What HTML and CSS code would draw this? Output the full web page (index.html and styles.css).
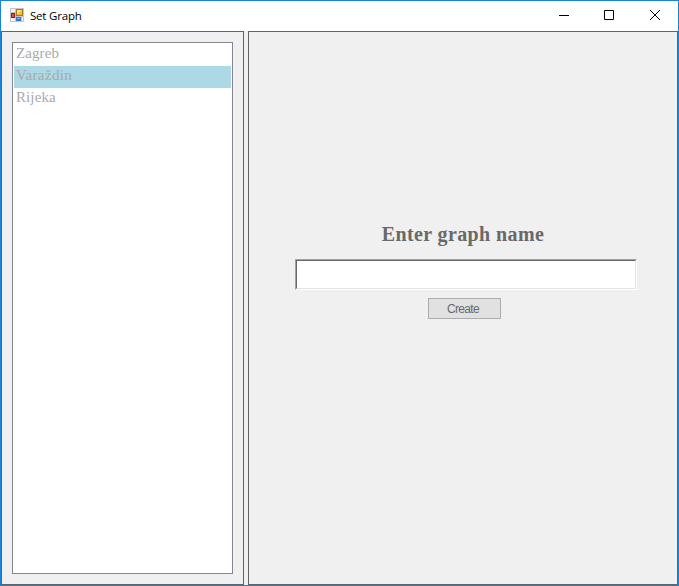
FILE: index.html
```html
<!DOCTYPE html>
<html lang="en">
<head>
<meta charset="utf-8">
<title>Set Graph</title>
<link rel="stylesheet" href="styles.css">
</head>
<body>
<div class="window">
  <header class="titlebar">
    <svg class="app-icon" width="14" height="14" viewBox="0 0 14 14" shape-rendering="crispEdges">
      <path fill="#c3c5c9" d="M0 0h14v14H0z"/>
      <path fill="#f4f5f7" d="M1 1h4v3H1zM1 10h4v3H1zM12 9h1v4h-1z"/>
      <path fill="#a87a20" d="M6 1h7v7H6z"/>
      <path fill="#f9bd2c" d="M7 2h5v5H7z"/>
      <path fill="#ffe07c" d="M7 2h4v2H9v2H7z"/>
      <path fill="#9c1c14" d="M1 5h4v5H1z"/>
      <path fill="#dc5140" d="M2 6h2v3H2z"/>
      <path fill="#3f73cf" d="M6 9h5v4H6z"/>
      <path fill="#80adf5" d="M7 10h3v1H7z"/>
    </svg>
    <span class="title">Set Graph</span>
    <div class="controls">
      <svg width="10" height="10" viewBox="0 0 10 10"><path d="M0 5.5h10"/></svg>
      <svg width="10" height="10" viewBox="0 0 10 10"><path d="M.5.5h9v9h-9z"/></svg>
      <svg width="10" height="10" viewBox="0 0 10 10"><path d="M0 0l10 10M10 0L0 10"/></svg>
    </div>
  </header>
  <main class="panes">
    <section class="pane">
      <ul class="list">
        <li class="zagreb">Zagreb</li>
        <li class="varazdin selected">Varaždin</li>
        <li class="rijeka">Rijeka</li>
      </ul>
    </section>
    <section class="pane form">
      <h1>Enter graph name</h1>
      <div class="field"><input type="text" aria-label="Graph name"></div>
      <button><span>Create</span></button>
    </section>
  </main>
</div>
</body>
</html>
```

FILE: styles.css
```css
* { box-sizing: border-box; }
body { margin: 0; }
.window {
  width: 679px;
  height: 586px;
  border: 1px solid #1883d7;
  background: #f0f0f0;
  display: flex;
  flex-direction: column;
}
.titlebar {
  height: 30px;
  flex: none;
  background: #fff;
  display: flex;
  align-items: center;
  padding: 0 18px 2px 9px;
}
.title {
  margin-left: 6px;
  font: 11.5px/16px "Open Sans", sans-serif;
  letter-spacing: -0.2px;
  color: #000;
  padding-top: 2px;
}
.controls { margin-left: auto; display: flex; gap: 35px; }
.controls svg { display: block; fill: none; stroke: #000; stroke-width: 1; }
.controls svg:last-child { margin-left: 1px; }
.panes {
  flex: 1;
  display: grid;
  grid-template-columns: 243px 430px;
  gap: 4px;
}
.pane { border: 1px solid #646464; padding: 10px; background: #f0f0f0; }
.list {
  list-style: none;
  margin: 0;
  padding: 1px;
  width: 221px;
  height: 532px;
  border: 1px solid #828790;
  background: #fff;
  font: 15px/18px "Liberation Serif", serif;
  color: #a9a9a9;
}
.list li { height: 22px; padding-left: 2px; }
.zagreb { letter-spacing: 0.1px; }
.varazdin { letter-spacing: 0.35px; }
.rijeka { letter-spacing: 0.1px; }
.list .selected { background: #add8e6; }
.form {
  display: flex;
  flex-direction: column;
  align-items: center;
  padding: 189px 0 0;
}
h1 {
  margin: 0;
  font: bold 20px/26px "Liberation Serif", serif;
  letter-spacing: 0.38px;
  color: #696969;
}
.field {
  width: 342px;
  height: 31px;
  margin: 12px 0 0 5px;
  border: 1px solid;
  border-color: #a0a0a0 #fff #fff #a0a0a0;
}
input {
  display: block;
  width: 100%;
  height: 100%;
  border: 1px solid;
  border-color: #696969 #e3e3e3 #e3e3e3 #696969;
  border-radius: 0;
  background: #fff;
  padding: 2px;
  outline: none;
}
button {
  width: 73px;
  height: 21px;
  margin: 8px 0 0 2px;
  padding: 1px 2px 0 0;
  border: 1px solid #adadad;
  border-radius: 0;
  background: #e1e1e1;
  color: #696969;
  font: 12px/16px "Liberation Sans", sans-serif;
  letter-spacing: -0.7px;
}
```
